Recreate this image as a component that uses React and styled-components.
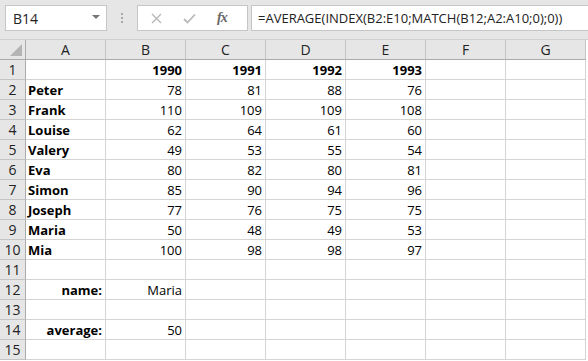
import React from 'react';
import styled, { createGlobalStyle } from 'styled-components';

const GlobalStyle = createGlobalStyle`
  html, body {
    margin: 0;
    padding: 0;
    background: #ffffff;
  }
  body {
    font-family: 'Open Sans', 'Liberation Sans', sans-serif;
    overflow: hidden;
  }
`;

const COLS = ['A', 'B', 'C', 'D', 'E', 'F', 'G'];

const rows = [
  ['', '1990', '1991', '1992', '1993'],
  ['Peter', 78, 81, 88, 76],
  ['Frank', 110, 109, 109, 108],
  ['Louise', 62, 64, 61, 60],
  ['Valery', 49, 53, 55, 54],
  ['Eva', 80, 82, 80, 81],
  ['Simon', 85, 90, 94, 96],
  ['Joseph', 77, 76, 75, 75],
  ['Maria', 50, 48, 49, 53],
  ['Mia', 100, 98, 98, 97],
  [],
  ['name:', 'Maria'],
  [],
  ['average:', 50],
  [],
];

const Page = styled.div`
  width: 588px;
  height: 361px;
  overflow: hidden;
  background: #fff;
`;

const Toolbar = styled.div`
  height: 40px;
  background: #e6e6e6;
  display: flex;
  align-items: flex-start;
  padding: 5px 0 0 5px;
  box-sizing: border-box;
  border-bottom: 1px solid #d0d0d0;
`;

const NameBox = styled.div`
  width: 102px;
  height: 26px;
  box-sizing: border-box;
  background: #fff;
  border: 1px solid #c6c6c6;
  display: flex;
  align-items: center;
  justify-content: space-between;
  padding: 0 6px 0 7px;
  font-size: 14px;
  color: #222;
`;

const Caret = styled.span`
  width: 0;
  height: 0;
  border-left: 4px solid transparent;
  border-right: 4px solid transparent;
  border-top: 4px solid #777;
  margin-bottom: 3px;
`;

const Grip = styled.div`
  width: 30px;
  display: flex;
  flex-direction: column;
  align-items: center;
  gap: 2px;
  padding-top: 8px;
  span {
    width: 2px;
    height: 2px;
    background: #a8a8a8;
  }
`;

const FxBox = styled.div`
  width: 111px;
  height: 26px;
  box-sizing: border-box;
  background: #fff;
  border: 1px solid #c6c6c6;
  display: flex;
  align-items: center;
  padding-left: 13px;
  gap: 21px;
`;

const Fx = styled.span`
  font-family: 'Liberation Serif', serif;
  font-style: italic;
  font-weight: 700;
  font-size: 14px;
  color: #666;
  letter-spacing: -1px;
`;

const Formula = styled.div`
  flex: 1;
  height: 26px;
  box-sizing: border-box;
  margin-left: 3px;
  background: #fff;
  border: 1px solid #c6c6c6;
  border-right: none;
  display: flex;
  align-items: center;
  padding-left: 6px;
  font-size: 13px;
  color: #222;
  white-space: nowrap;
`;

const Sheet = styled.div`
  display: grid;
  grid-template-columns: 26px repeat(7, 80px);
  grid-auto-rows: 20px;
  grid-template-rows: 20px;
  font-size: 13px;
`;

const Corner = styled.div`
  background: #e6e6e6;
  border-right: 1px solid #ababab;
  border-bottom: 1px solid #ababab;
  box-sizing: border-box;
  position: relative;
  &::after {
    content: '';
    position: absolute;
    right: 3px;
    bottom: 3px;
    border-left: 12px solid transparent;
    border-bottom: 12px solid #b4b4b4;
  }
`;

const ColHead = styled.div`
  background: #e6e6e6;
  border-right: 1px solid #c4c4c4;
  border-bottom: 1px solid #ababab;
  box-sizing: border-box;
  display: flex;
  align-items: center;
  justify-content: center;
  font-size: 14px;
  color: #222;
`;

const RowHead = styled.div`
  background: #e6e6e6;
  border-right: 1px solid #ababab;
  border-bottom: 1px solid #c4c4c4;
  box-sizing: border-box;
  display: flex;
  align-items: center;
  justify-content: center;
  font-size: 14px;
  color: #222;
`;

const Cell = styled.div`
  border-right: 1px solid #d4d4d4;
  border-bottom: 1px solid #d4d4d4;
  box-sizing: border-box;
  display: flex;
  align-items: center;
  justify-content: ${p => (p.$right ? 'flex-end' : 'flex-start')};
  padding: 0 3px 0 2px;
  font-weight: ${p => (p.$bold ? 700 : 400)};
  color: #000;
  white-space: nowrap;
  overflow: hidden;
`;

const CrossIcon = () => (
  <svg width="11" height="11" viewBox="0 0 11 11">
    <path d="M1 1L10 10M10 1L1 10" stroke="#b8b8b8" strokeWidth="1.4" fill="none" />
  </svg>
);

const CheckIcon = () => (
  <svg width="13" height="11" viewBox="0 0 13 11">
    <path d="M1 6L4.5 9.5L12 1.5" stroke="#b8b8b8" strokeWidth="1.8" fill="none" />
  </svg>
);

export default function App() {
  return (
    <Page>
      <GlobalStyle />
      <Toolbar>
        <NameBox>
          B14
          <Caret />
        </NameBox>
        <Grip>
          <span />
          <span />
          <span />
        </Grip>
        <FxBox>
          <CrossIcon />
          <CheckIcon />
          <Fx>fx</Fx>
        </FxBox>
        <Formula>=AVERAGE(INDEX(B2:E10;MATCH(B12;A2:A10;0);0))</Formula>
      </Toolbar>
      <Sheet>
        <Corner />
        {COLS.map(c => (
          <ColHead key={c}>{c}</ColHead>
        ))}
        {rows.map((r, i) => (
          <React.Fragment key={i}>
            <RowHead>{i + 1}</RowHead>
            {COLS.map((c, j) => {
              const v = r[j];
              const labelRow = i === 11 || i === 13;
              const bold = i === 0 || j === 0;
              const right = j > 0 || labelRow;
              return (
                <Cell key={c} $bold={bold} $right={right}>
                  {v}
                </Cell>
              );
            })}
          </React.Fragment>
        ))}
      </Sheet>
    </Page>
  );
}
